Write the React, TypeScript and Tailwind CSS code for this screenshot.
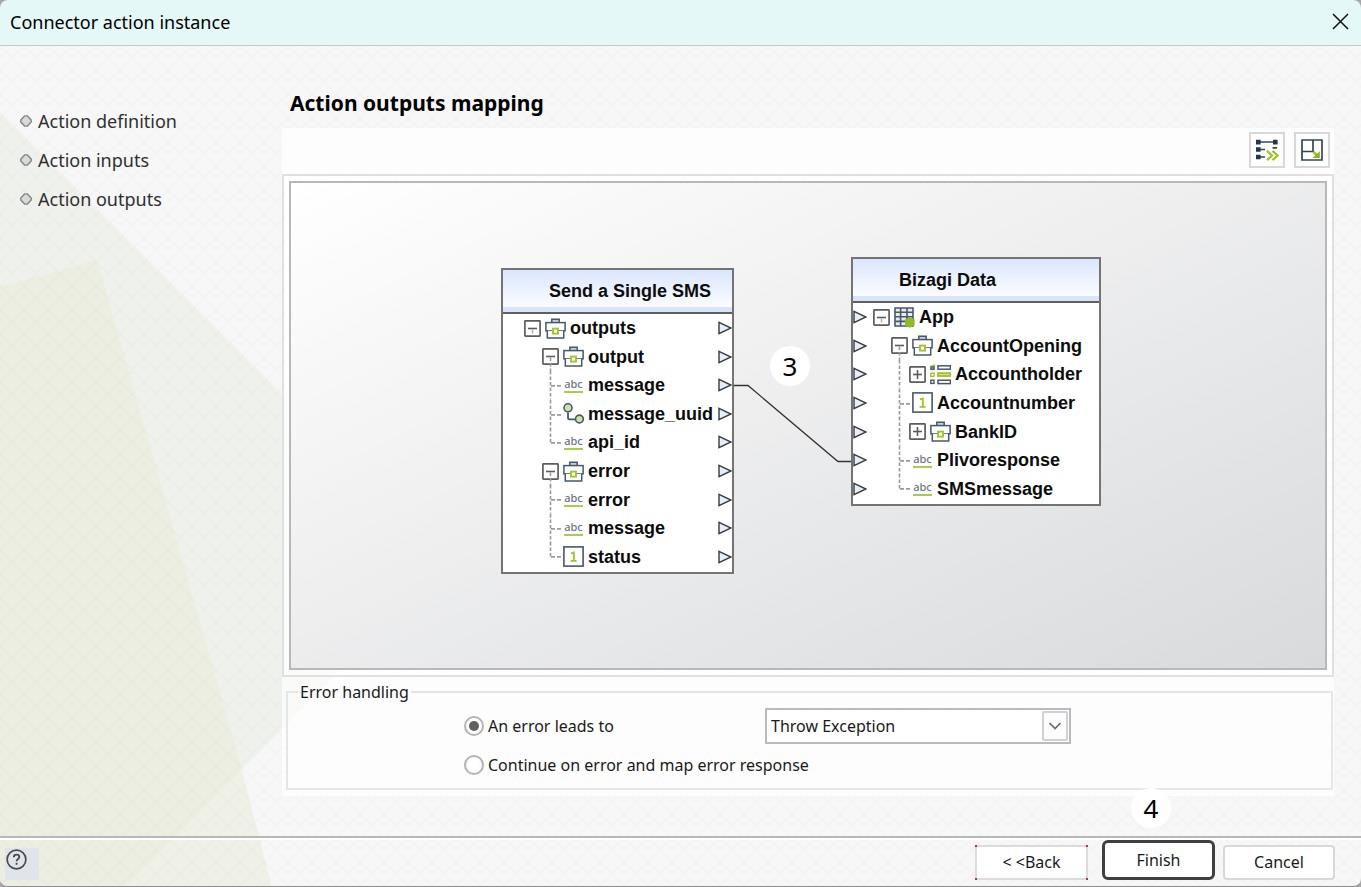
import { useState, type ReactNode } from "react";

const steps = ["Action definition", "Action inputs", "Action outputs"];

type Slot = "blank" | "minus" | "minusTail" | "plus" | "pass" | "branch" | "last";
type IconName = "case" | "abc" | "link" | "number" | "table" | "list";
type TreeRow = { slots: Slot[]; icon: IconName; label: string };

const sourceRows: TreeRow[] = [
  { slots: ["minus"], icon: "case", label: "outputs" },
  { slots: ["blank", "minusTail"], icon: "case", label: "output" },
  { slots: ["blank", "branch"], icon: "abc", label: "message" },
  { slots: ["blank", "branch"], icon: "link", label: "message_uuid" },
  { slots: ["blank", "last"], icon: "abc", label: "api_id" },
  { slots: ["blank", "minusTail"], icon: "case", label: "error" },
  { slots: ["blank", "branch"], icon: "abc", label: "error" },
  { slots: ["blank", "branch"], icon: "abc", label: "message" },
  { slots: ["blank", "last"], icon: "number", label: "status" },
];

const targetRows: TreeRow[] = [
  { slots: ["minus"], icon: "table", label: "App" },
  { slots: ["blank", "minusTail"], icon: "case", label: "AccountOpening" },
  { slots: ["blank", "pass", "plus"], icon: "list", label: "Accountholder" },
  { slots: ["blank", "branch"], icon: "number", label: "Accountnumber" },
  { slots: ["blank", "pass", "plus"], icon: "case", label: "BankID" },
  { slots: ["blank", "branch"], icon: "abc", label: "Plivoresponse" },
  { slots: ["blank", "last"], icon: "abc", label: "SMSmessage" },
];

function TreeSlot({ kind }: { kind: Slot }) {
  if (kind === "blank") return <span className="w-[18px] shrink-0" />;
  if (kind === "pass" || kind === "branch" || kind === "last") {
    return (
      <svg className="h-full w-[18px] shrink-0 overflow-visible" fill="none" stroke="#9a9a9a" strokeWidth="1.6" strokeDasharray="3.5 2" aria-hidden="true">
        <line x1="8.5" y1="0" x2="8.5" y2={kind === "last" ? "52%" : "100%"} />
        {kind !== "pass" && <line x1="9" y1="52%" x2="20" y2="52%" strokeDasharray="4 2" />}
      </svg>
    );
  }
  return (
    <span className="flex h-full w-[18px] shrink-0 items-center">
      <svg className="h-[17px] w-[17px] overflow-visible" viewBox="0 0 17 17" fill="none" aria-hidden="true">
        <rect x="0.9" y="0.9" width="15.2" height="15.2" rx="0.6" fill="#fff" stroke="#5c5c5c" strokeWidth="1.7" />
        <path d="M4 8.5h9" stroke="#5c5c5c" strokeWidth="1.6" />
        {kind === "plus" && <path d="M8.5 4v9" stroke="#5c5c5c" strokeWidth="1.6" />}
        {kind === "minus" && <path d="M8.5 9.5v4" stroke="#b0b0b0" strokeWidth="1.5" />}
        {kind === "minusTail" && <path d="M8.5 9.5V23" stroke="#9a9a9a" strokeWidth="1.6" strokeDasharray="3.5 2" />}
      </svg>
    </span>
  );
}

function TreeIcon({ name }: { name: IconName }) {
  if (name === "abc") {
    return (
      <span className="flex w-[21px] shrink-0 justify-center" aria-hidden="true">
        <span className="h-[15px] border-b-2 border-[#a9cb4f] font-['Noto_Sans'] text-[11px] leading-[12px] font-medium text-[#6c7783]">abc</span>
      </span>
    );
  }
  const shapes: Record<Exclude<IconName, "abc">, ReactNode> = {
    case: (
      <>
        <path d="M6.8 4.6V1.2h7.4v3.4" stroke="#46586a" strokeWidth="1.5" fill="#c5ccd3" />
        <rect x="0.9" y="4.6" width="19.2" height="8.2" stroke="#46586a" strokeWidth="1.5" fill="#fff" />
        <path d="M2.3 12.8v7.2h16.4v-7.2" stroke="#46586a" strokeWidth="1.5" fill="#fff" />
        <rect x="8" y="10.6" width="5" height="5" stroke="#a3c428" strokeWidth="1.9" fill="#fff" />
      </>
    ),
    link: (
      <>
        <path d="M5 9.5v5.2q0 1.6 1.6 1.6H12" stroke="#46586a" strokeWidth="1.8" />
        <circle cx="5" cy="4.8" r="4" stroke="#46586a" strokeWidth="1.6" fill="#d4dfae" />
        <circle cx="16.4" cy="16" r="3.9" stroke="#46586a" strokeWidth="1.6" fill="#d4dfae" />
      </>
    ),
    number: (
      <>
        <rect x="0.9" y="0.9" width="19.2" height="19.2" stroke="#46586a" strokeWidth="1.6" fill="#fff" />
        <path d="M8 7.4l2.8-.9v8.3M7.6 14.9h6" stroke="#a3c428" strokeWidth="1.9" />
      </>
    ),
    table: (
      <>
        <path d="M1 1h18v18H1zM1 5.2h18M1 9.8h18M1 14.4h18M6.6 1v18M13 1v18" stroke="#46586a" strokeWidth="1.6" fill="#e9ecef" />
        <path d="M11 12.2l4.8-1.8 4.8 1.8v6l-4.8 2.6-4.8-2.6z" fill="#8fbc26" />
      </>
    ),
    list: (
      <>
        <rect x="0.8" y="2.4" width="3.4" height="3.2" fill="#6f8a3c" stroke="#46586a" />
        <path d="M1.6 2.2l3.6-1.4" stroke="#a3c428" strokeWidth="1.4" />
        <rect x="0.8" y="9.2" width="3.2" height="3.2" stroke="#a3c428" strokeWidth="1.4" fill="#fff" />
        <rect x="0.8" y="16.2" width="3.2" height="3.2" stroke="#46586a" strokeWidth="1.4" fill="#fff" />
        <rect x="8" y="1.8" width="12.4" height="3.4" stroke="#46586a" strokeWidth="1.5" fill="#fff" />
        <rect x="8" y="9.2" width="12.4" height="2.8" stroke="#a3c428" strokeWidth="1.9" fill="#d9e6a2" />
        <rect x="8" y="16.2" width="12.4" height="3.4" stroke="#46586a" strokeWidth="1.5" fill="#fff" />
      </>
    ),
  };
  return (
    <svg className="h-[21px] w-[21px] shrink-0" viewBox="0 0 21 21" fill="none" aria-hidden="true">
      {shapes[name]}
    </svg>
  );
}

function Port() {
  return (
    <svg className="h-[14px] w-[14px] shrink-0" viewBox="0 0 14 14" aria-hidden="true">
      <path d="M1 1.3 13 7 1 12.7z" fill="#e6eefa" stroke="#3a3a3a" strokeWidth="1.4" />
    </svg>
  );
}

function MappingNode({ title, rows, side, className }: { title: string; rows: TreeRow[]; side: "left" | "right"; className: string }) {
  return (
    <section className={`absolute border-2 border-[#747474] bg-white pb-px font-['Liberation_Sans',Arial,sans-serif] text-[18px] leading-5 font-bold text-[#0c0c0c] ${className}`}>
      <h2 className={`flex h-11 items-center border-b-2 border-[#606060] bg-linear-to-b from-[#dbe6fd] to-white text-[18px] shadow-[inset_0_-5px_0_#d9e4fb] ${side === "right" ? "pl-[46px]" : "pl-[46px]"}`}>
        {title}
      </h2>
      <ul className={`grid auto-rows-fr ${side === "right" ? "h-[257px]" : "h-[200px]"}`}>
        {rows.map((row, i) => (
          <li key={i} className="flex items-center">
            {side === "left" && <Port />}
            <span className={`flex h-full flex-1 items-center ${side === "right" ? "pl-[21px]" : "pl-[6px]"}`}>
              {row.slots.map((slot, n) => (
                <TreeSlot key={n} kind={slot} />
              ))}
              <span className="ml-[3px] flex items-center gap-1">
                <TreeIcon name={row.icon} />
                {row.label}
              </span>
            </span>
            {side === "right" && <Port />}
          </li>
        ))}
      </ul>
    </section>
  );
}

function Backdrop() {
  return (
    <svg className="absolute inset-0 -z-10 h-full w-full" aria-hidden="true">
      <defs>
        <pattern id="weave" width="24" height="24" patternUnits="userSpaceOnUse">
          <path d="M0 0l24 24M24 0L0 24" stroke="#000" strokeOpacity="0.014" strokeWidth="1.4" fill="none" />
        </pattern>
      </defs>
      <rect width="100%" height="100%" fill="#f7f7f7" />
      <path d="M0 66 449 515 124 842H0z" fill="#eff2ec" />
      <path d="M0 241 97 214 241 721 272 842H0z" fill="#e8e9d5" fillOpacity="0.5" />
      <rect width="100%" height="100%" fill="url(#weave)" />
    </svg>
  );
}

function Badge({ children, className }: { children: ReactNode; className: string }) {
  return (
    <span className={`absolute flex h-10 w-10 items-center justify-center rounded-full bg-white text-[26px] leading-10 text-black ${className}`}>
      {children}
    </span>
  );
}

export default function App() {
  const [mode, setMode] = useState("throw");
  return (
    <div className="flex min-h-screen flex-col bg-[#a9a4a6] font-['Noto_Sans','Segoe_UI',sans-serif] text-[16px] leading-6 text-[#1a1a1a]">
      <header className="flex h-[46px] items-center justify-between rounded-t-lg border-b border-[#c6c9c9] bg-[#e3f8f7] pr-3 pb-[2px] pl-[10px]">
        <h1 className="text-[18px] text-black">Connector action instance</h1>
        <button type="button" aria-label="Close" className="flex h-[17px] w-[17px] items-center justify-center">
          <svg className="h-[17px] w-[17px]" viewBox="0 0 17 17" fill="none" stroke="#111" strokeWidth="1.5" aria-hidden="true">
            <path d="M1 1l15 15M16 1L1 16" />
          </svg>
        </button>
      </header>

      <div className="relative isolate flex flex-1 flex-col overflow-hidden rounded-b-lg border-b border-[#8f8f8f]">
        <Backdrop />
        <div className="flex flex-1">
          <nav className="w-[282px] shrink-0 pt-[55px] pl-5">
            <ul className="flex flex-col">
              {steps.map((step) => (
                <li key={step} className="flex h-[39px] items-center gap-[6px] text-[18px] text-[#303030]">
                  <svg className="h-3 w-3" viewBox="0 0 12 12" aria-hidden="true">
                    <path d="M4.6.9h2.8L11.2 5v2L7.4 11.1H4.6L.8 7V5z" fill="#d9d9d9" stroke="#858585" strokeWidth="1.4" />
                  </svg>
                  {step}
                </li>
              ))}
            </ul>
          </nav>

          <main className="mr-[27px] flex min-w-0 flex-1 flex-col pb-10">
            <h2 className="h-[82px] pt-[43px] pl-2 text-[21px] leading-7 font-bold text-black">Action outputs mapping</h2>
            <div className="flex flex-1 flex-col bg-white/70">
              <div className="flex h-[46px] items-start justify-end gap-[9px] pt-1 pr-1">
                <button type="button" aria-label="Map automatically" className="flex h-9 w-9 items-center justify-center border-2 border-[#d8d8d8] bg-white">
                  <svg className="h-6 w-6 shrink-0" viewBox="0 0 24 24" fill="none" aria-hidden="true">
                    <path d="M3 4h18M3 11.5h7M3 19h7M17.5 9.8h4.5" stroke="#30475a" strokeWidth="1.7" />
                    <path d="M1 1.8h4.6v4.6H1zM18 1.8h4.6v4.6H18zM1 9.3h4.6v4.4H1zM1 16.8h4.6v4.4H1z" fill="#21384b" />
                    <path d="M12 12.8l5 4.7-5 4.7M17.5 12.8l5 4.7-5 4.7" stroke="#a3c428" strokeWidth="2.3" />
                  </svg>
                </button>
                <button type="button" aria-label="Maximize" className="flex h-9 w-9 items-center justify-center border-2 border-[#d8d8d8] bg-white">
                  <svg className="h-6 w-6 shrink-0" viewBox="0 0 24 24" fill="none" aria-hidden="true">
                    <path d="M2 2h20v20H2zM13 2v11.5H2" stroke="#30475a" strokeWidth="1.7" />
                    <path d="M13.2 14l4.8 4" stroke="#a3c428" strokeWidth="2.6" />
                    <path d="M19.8 13.2v6.8h-7.4z" fill="#8fb51c" />
                  </svg>
                </button>
              </div>

              <div className="flex flex-1 border-2 border-[#e0e0e0] bg-white/40 p-[5px]">
                <div className="relative min-h-[480px] flex-1 border-2 border-[#b8b8b8] bg-linear-to-br from-white to-[#d9dadc]">
                  <svg className="absolute inset-0 h-full w-full" aria-hidden="true">
                    <path d="M442 202.500h15l90 76h15" fill="none" stroke="#333" strokeWidth="1.3" />
                  </svg>
                  <MappingNode title="Send a Single SMS" rows={sourceRows} side="right" className="top-[85px] left-[210px] w-[233px]" />
                  <MappingNode title="Bizagi Data" rows={targetRows} side="left" className="top-[74px] left-[560px] w-[250px]" />
                  <Badge className="top-[163px] left-[479px]">3</Badge>
                </div>
              </div>

              <fieldset className="mt-[3px] mr-px mb-[6px] ml-1 flex h-[110px] flex-col border-2 border-[#e6e6e6] pt-1 pl-[176px]">
                <legend className="-ml-[166px] px-[2px]">Error handling</legend>
                <div className="flex h-9 shrink-0 items-center">
                  <label className="flex w-[301px] items-center gap-1">
                    <input
                      type="radio"
                      name="onError"
                      checked={mode === "throw"}
                      onChange={() => setMode("throw")}
                      className="h-5 w-5 appearance-none rounded-full border-2 border-[#b4b4b4] bg-white bg-clip-content p-[3px] checked:bg-[#5f5f5f]"
                    />
                    An error leads to
                  </label>
                  <span className="relative flex">
                    <select aria-label="Error action" className="h-9 w-[306px] appearance-none border-2 border-[#b9b9c0] bg-white pl-1">
                      <option>Throw Exception</option>
                    </select>
                    <span className="pointer-events-none absolute top-[3px] right-[3px] flex h-[30px] w-[26px] items-center justify-center rounded-xs border-2 border-[#d0d0d0] bg-[#fdfdfd]">
                      <svg className="h-3 w-[14px]" viewBox="0 0 14 12" fill="none" stroke="#6a6a6a" strokeWidth="1.7" aria-hidden="true">
                        <path d="M1.5 3l5.500 5.500L12.500 3" />
                      </svg>
                    </span>
                  </span>
                </div>
                <div className="flex h-[42px] shrink-0 items-center">
                  <label className="flex items-center gap-1">
                    <input
                      type="radio"
                      name="onError"
                      checked={mode === "continue"}
                      onChange={() => setMode("continue")}
                      className="h-5 w-5 appearance-none rounded-full border-2 border-[#b4b4b4] bg-white bg-clip-content p-[3px] checked:bg-[#5f5f5f]"
                    />
                    Continue on error and map error response
                  </label>
                </div>
              </fieldset>
            </div>
          </main>
        </div>

        <footer className="flex h-[50px] items-center justify-between border-t-2 border-[#b8b8b8] pr-[26px] pl-[5px] shadow-[inset_0_2px_0_#fff]">
          <button type="button" aria-label="Help" className="mt-1 flex h-8 w-[34px] items-start bg-[#e0e5ec] px-px py-px">
            <svg className="h-[21px] w-[21px]" viewBox="0 0 22 22" fill="none" stroke="#4a4a4a" aria-hidden="true">
              <circle cx="11" cy="11" r="9.8" strokeWidth="1.8" />
              <path d="M8.200 8.600c0-1.800 1.200-2.700 2.900-2.700s2.800.900 2.800 2.400c0 2.200-2.800 2.200-2.800 4.600M11.100 14.400v2" strokeWidth="1.900" />
            </svg>
          </button>
          <div className="flex items-center">
            <button type="button" className="relative h-[35px] w-[113px] border-2 border-[#dcdcdc] bg-white">
              &lt; &lt;Back
              <span className="absolute -top-[2px] -left-[2px] h-[2px] w-[2px] bg-[#a83a3a]" />
              <span className="absolute -top-[2px] -right-[2px] h-[2px] w-[2px] bg-[#a83a3a]" />
              <span className="absolute -bottom-[2px] -left-[2px] h-[2px] w-[2px] bg-[#a83a3a]" />
              <span className="absolute -right-[2px] -bottom-[2px] h-[2px] w-[2px] bg-[#a83a3a]" />
            </button>
            <span className="relative mb-1 ml-[14px]">
              <Badge className="-top-[52px] left-[29px]">4</Badge>
              <button type="button" className="h-10 w-[113px] rounded-md border-3 border-[#3f3f3f] bg-white">
                Finish
              </button>
            </span>
            <button type="button" className="ml-2 h-[35px] w-[112px] rounded-sm border-2 border-[#d8d8d8] bg-white">
              Cancel
            </button>
          </div>
        </footer>
      </div>
    </div>
  );
}
